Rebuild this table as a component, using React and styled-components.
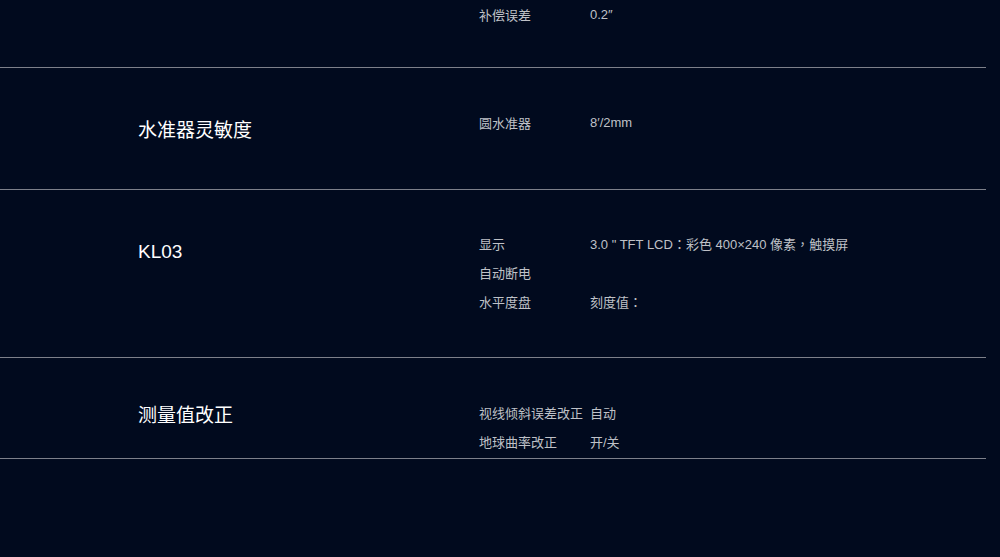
import styled, { createGlobalStyle } from "styled-components";

const GlobalStyle = createGlobalStyle`
    html, body {
        margin: 0;
        padding: 0;
        background: #010a1e;
    }
    body {
        font-family: "Liberation Sans", "Noto Sans CJK SC", sans-serif;
        color: #fff;
    }
`;

const Page = styled.div`
    width: 986px;
    height: 557px;
    overflow: hidden;
    background: #010a1e;
`;

const Section = styled.section`
    display: flex;
    height: ${(p) => p.$h}px;
    padding-top: ${(p) => p.$top}px;
    box-sizing: border-box;
    border-bottom: 1px solid #7d808a;
`;

const Title = styled.h3`
    width: 479px;
    flex-shrink: 0;
    margin: 0;
    padding: ${(p) => p.$offset}px 0 0 138px;
    box-sizing: border-box;
    font-size: 19px;
    font-weight: 400;
    line-height: 26px;
    color: #fff;
`;

const Specs = styled.div`
    display: flex;
    flex-direction: column;
`;

const Row = styled.div`
    display: flex;
    height: 29px;
    align-items: center;
    font-size: 13px;
    color: #bfc1c7;
    white-space: nowrap;
`;

const Label = styled.span`
    width: 111px;
    flex-shrink: 0;
`;

const Value = styled.span``;

// centred full-width punctuation, as in the original
const Punct = styled.span`
    font-family: "Noto Sans CJK TC", sans-serif;
`;

const sections = [
    {
        h: 68,
        top: -4,
        offset: 0,
        title: "",
        rows: [["补偿误差", "0.2″"]],
    },
    {
        h: 122,
        top: 40,
        offset: 10,
        title: "水准器灵敏度",
        rows: [["圆水准器", "8′/2mm"]],
    },
    {
        h: 168,
        top: 39,
        offset: 10,
        title: "KL03",
        rows: [
            ["显示", ["3.0 \" TFT LCD", "：", "彩色 400×240 像素", "，", "触摸屏"]],
            ["自动断电", ""],
            ["水平度盘", ["刻度值", "："]],
        ],
    },
    {
        h: 101,
        top: 40,
        offset: 5,
        title: "测量值改正",
        rows: [
            ["视线倾斜误差改正", "自动"],
            ["地球曲率改正", "开/关"],
        ],
    },
];

const renderValue = (value) =>
    Array.isArray(value)
        ? value.map((part, k) =>
              part === "：" || part === "，" ? <Punct key={k}>{part}</Punct> : part
          )
        : value;

const App = () => {
    return (
        <Page>
            <GlobalStyle />
            {sections.map((s, i) => (
                <Section key={i} $h={s.h} $top={s.top}>
                    <Title $offset={s.offset}>{s.title}</Title>
                    <Specs>
                        {s.rows.map(([label, value], j) => (
                            <Row key={j}>
                                <Label>{label}</Label>
                                <Value>{renderValue(value)}</Value>
                            </Row>
                        ))}
                    </Specs>
                </Section>
            ))}
        </Page>
    );
};

export default App;
